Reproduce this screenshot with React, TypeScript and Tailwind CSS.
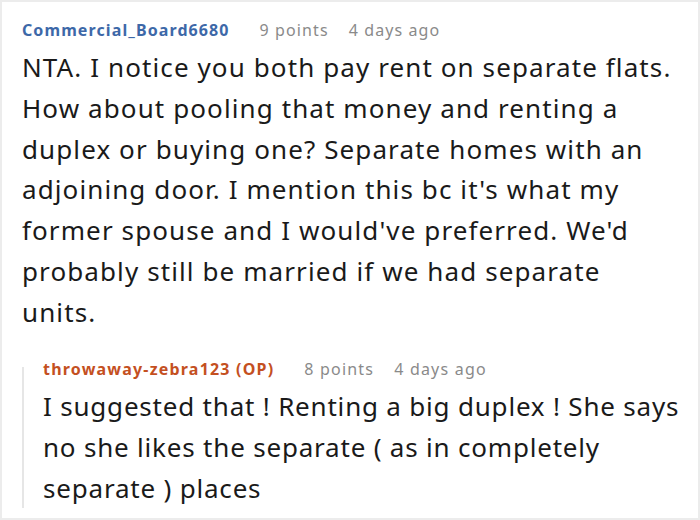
const body = [
  "NTA. I notice you both pay rent on separate flats.",
  "How about pooling that money and renting a",
  "duplex or buying one? Separate homes with an",
  "adjoining door. I mention this bc it's what my",
  "former spouse and I would've preferred. We'd",
  "probably still be married if we had separate",
  "units.",
];
const reply = [
  "I suggested that ! Renting a big duplex ! She says",
  "no she likes the separate ( as in completely",
  "separate ) places",
];

export default function App() {
  return (
    <div className="w-[700px] h-[520px] bg-white border-2 border-[#ececec] box-border overflow-hidden" style={{ fontFamily: '"Noto Sans", sans-serif' }}>
      <div className="pl-[20px] pt-[16px]">
        <div className="flex items-baseline text-[16px] leading-[24px] tracking-[1.1px] whitespace-nowrap">
          <span className="font-bold text-[#3d68a8]">Commercial_Board6680</span>
          <span className="ml-[30px] text-[#8a8a8a]">9 points</span>
          <span className="ml-[20px] text-[#8a8a8a]">4 days ago</span>
        </div>
        <div className="mt-[5px] text-[26px] leading-[40.8px] text-[#1a1a1a] tracking-[1.1px] whitespace-nowrap">
          {body.map((l) => (
            <div key={l}>{l}</div>
          ))}
        </div>
        <div className="mt-[24px] flex">
          <div className="w-[2px] mt-[10px] mb-[1px] bg-[#e6e6e6] shrink-0" />
          <div className="pl-[19px]">
            <div className="flex items-baseline text-[16px] leading-[24px] tracking-[1.2px] whitespace-nowrap">
              <span className="font-bold text-[#c4501f]">throwaway-zebra123 (OP)</span>
              <span className="ml-[30px] text-[#8a8a8a]">8 points</span>
              <span className="ml-[20px] text-[#8a8a8a]">4 days ago</span>
            </div>
            <div className="mt-[5px] text-[26px] leading-[41px] text-[#1a1a1a] tracking-[0.8px] whitespace-nowrap">
              {reply.map((l) => (
                <div key={l}>{l}</div>
              ))}
            </div>
          </div>
        </div>
      </div>
    </div>
  );
}
